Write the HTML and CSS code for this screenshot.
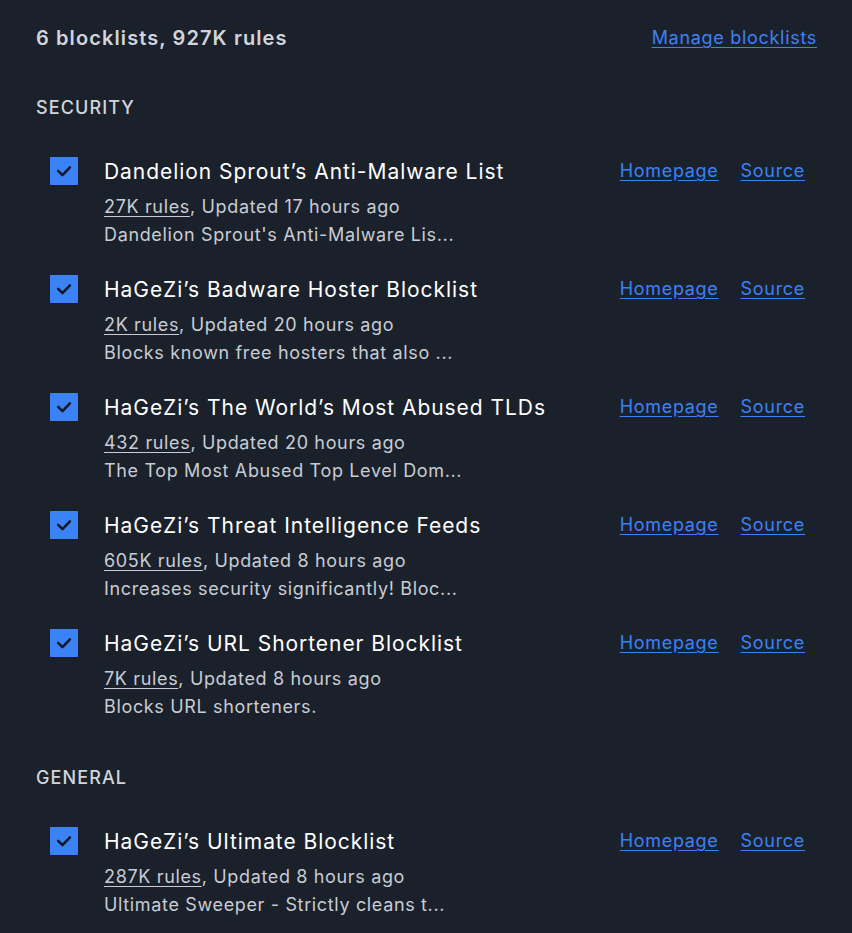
FILE: index.html
```html
<!DOCTYPE html>
<html lang="en">
<head>
<meta charset="utf-8">
<title>Blocklists</title>
<link rel="stylesheet" href="styles.css">
</head>
<body>
<main class="page">
  <header class="summary">
    <h1 class="summary-title">6 blocklists, 927K rules</h1>
    <a class="link manage" href="#">Manage blocklists</a>
  </header>

  <section class="group">
    <h2 class="group-title">SECURITY</h2>
    <ul class="list">
      <li class="item">
        <span class="check"><svg viewBox="0 0 28 28" width="28" height="28"><path d="M8.2 13.8 L12.5 18.1 L19.9 10.4" fill="none" stroke="#141a23" stroke-width="2.6" stroke-linecap="round" stroke-linejoin="round"/></svg></span>
        <div class="info">
          <div class="name">Dandelion Sprout’s Anti-Malware List</div>
          <div class="meta"><a class="rules" href="#">27K rules</a>, Updated 17 hours ago</div>
          <div class="desc">Dandelion Sprout's Anti-Malware Lis...</div>
        </div>
        <div class="links"><a class="link" href="#">Homepage</a><a class="link" href="#">Source</a></div>
      </li>
      <li class="item">
        <span class="check"><svg viewBox="0 0 28 28" width="28" height="28"><path d="M8.2 13.8 L12.5 18.1 L19.9 10.4" fill="none" stroke="#141a23" stroke-width="2.6" stroke-linecap="round" stroke-linejoin="round"/></svg></span>
        <div class="info">
          <div class="name">HaGeZi’s Badware Hoster Blocklist</div>
          <div class="meta"><a class="rules" href="#">2K rules</a>, Updated 20 hours ago</div>
          <div class="desc">Blocks known free hosters that also ...</div>
        </div>
        <div class="links"><a class="link" href="#">Homepage</a><a class="link" href="#">Source</a></div>
      </li>
      <li class="item">
        <span class="check"><svg viewBox="0 0 28 28" width="28" height="28"><path d="M8.2 13.8 L12.5 18.1 L19.9 10.4" fill="none" stroke="#141a23" stroke-width="2.6" stroke-linecap="round" stroke-linejoin="round"/></svg></span>
        <div class="info">
          <div class="name">HaGeZi’s The World’s Most Abused TLDs</div>
          <div class="meta"><a class="rules" href="#">432 rules</a>, Updated 20 hours ago</div>
          <div class="desc">The Top Most Abused Top Level Dom...</div>
        </div>
        <div class="links"><a class="link" href="#">Homepage</a><a class="link" href="#">Source</a></div>
      </li>
      <li class="item">
        <span class="check"><svg viewBox="0 0 28 28" width="28" height="28"><path d="M8.2 13.8 L12.5 18.1 L19.9 10.4" fill="none" stroke="#141a23" stroke-width="2.6" stroke-linecap="round" stroke-linejoin="round"/></svg></span>
        <div class="info">
          <div class="name">HaGeZi’s Threat Intelligence Feeds</div>
          <div class="meta"><a class="rules" href="#">605K rules</a>, Updated 8 hours ago</div>
          <div class="desc">Increases security significantly! Bloc...</div>
        </div>
        <div class="links"><a class="link" href="#">Homepage</a><a class="link" href="#">Source</a></div>
      </li>
      <li class="item">
        <span class="check"><svg viewBox="0 0 28 28" width="28" height="28"><path d="M8.2 13.8 L12.5 18.1 L19.9 10.4" fill="none" stroke="#141a23" stroke-width="2.6" stroke-linecap="round" stroke-linejoin="round"/></svg></span>
        <div class="info">
          <div class="name">HaGeZi’s URL Shortener Blocklist</div>
          <div class="meta"><a class="rules" href="#">7K rules</a>, Updated 8 hours ago</div>
          <div class="desc">Blocks URL shorteners.</div>
        </div>
        <div class="links"><a class="link" href="#">Homepage</a><a class="link" href="#">Source</a></div>
      </li>
    </ul>
  </section>

  <section class="group">
    <h2 class="group-title">GENERAL</h2>
    <ul class="list">
      <li class="item">
        <span class="check"><svg viewBox="0 0 28 28" width="28" height="28"><path d="M8.2 13.8 L12.5 18.1 L19.9 10.4" fill="none" stroke="#141a23" stroke-width="2.6" stroke-linecap="round" stroke-linejoin="round"/></svg></span>
        <div class="info">
          <div class="name">HaGeZi’s Ultimate Blocklist</div>
          <div class="meta"><a class="rules" href="#">287K rules</a>, Updated 8 hours ago</div>
          <div class="desc">Ultimate Sweeper - Strictly cleans t...</div>
        </div>
        <div class="links"><a class="link" href="#">Homepage</a><a class="link" href="#">Source</a></div>
      </li>
    </ul>
  </section>
</main>
</body>
</html>
```

FILE: styles.css
```css
* { box-sizing: border-box; }
html, body {
  margin: 0;
  padding: 0;
  background: #1b212b;
}
body {
  font-family: Inter, "Noto Sans", sans-serif;
  color: #d1d5db;
}
.page {
  padding: 24px 36px 0 36px;
  display: flex;
  flex-direction: column;
  gap: 44px;
}
.summary {
  display: flex;
  justify-content: space-between;
  align-items: center;
  height: 28px;
}
.summary-title {
  margin: 0;
  font-size: 20px;
  font-weight: 600;
  line-height: 28px;
  letter-spacing: 1.1px;
  color: #d1d5db;
}
.link {
  color: #3b82f6;
  text-decoration: underline;
  text-underline-offset: 3px;
  font-size: 18px;
  line-height: 24px;
  letter-spacing: 0.7px;
}
.manage { margin-right: -1px; }
.group-title {
  margin: 0 0 37px 0;
  font-size: 18px;
  font-weight: 500;
  line-height: 24px;
  letter-spacing: 1.1px;
  color: #d1d5db;
}
.group + .group { margin-top: 1px; }
.list {
  list-style: none;
  margin: 0;
  padding: 0;
  display: flex;
  flex-direction: column;
  gap: 26px;
}
.item {
  display: flex;
  align-items: flex-start;
  padding: 0 12px 0 14px;
}
.check {
  width: 28px;
  height: 28px;
  background: #3b82f6;
  border-radius: 1px;
  flex: none;
  display: block;
}
.check svg { display: block; }
.info {
  flex: 1;
  margin-left: 26px;
  min-width: 0;
  padding-top: 1px;
}
.name {
  font-size: 21px;
  line-height: 28px;
  letter-spacing: 0.95px;
  color: #ffffff;
  margin-bottom: 7px;
}
.meta, .desc {
  font-size: 18px;
  line-height: 28px;
  letter-spacing: 0.65px;
  color: #c8ccd4;
}
.rules {
  color: #c8ccd4;
  text-decoration: underline;
  text-underline-offset: 3px;
}
.links {
  display: flex;
  gap: 22px;
  padding-top: 2px;
  margin-right: -1px;
}
```
